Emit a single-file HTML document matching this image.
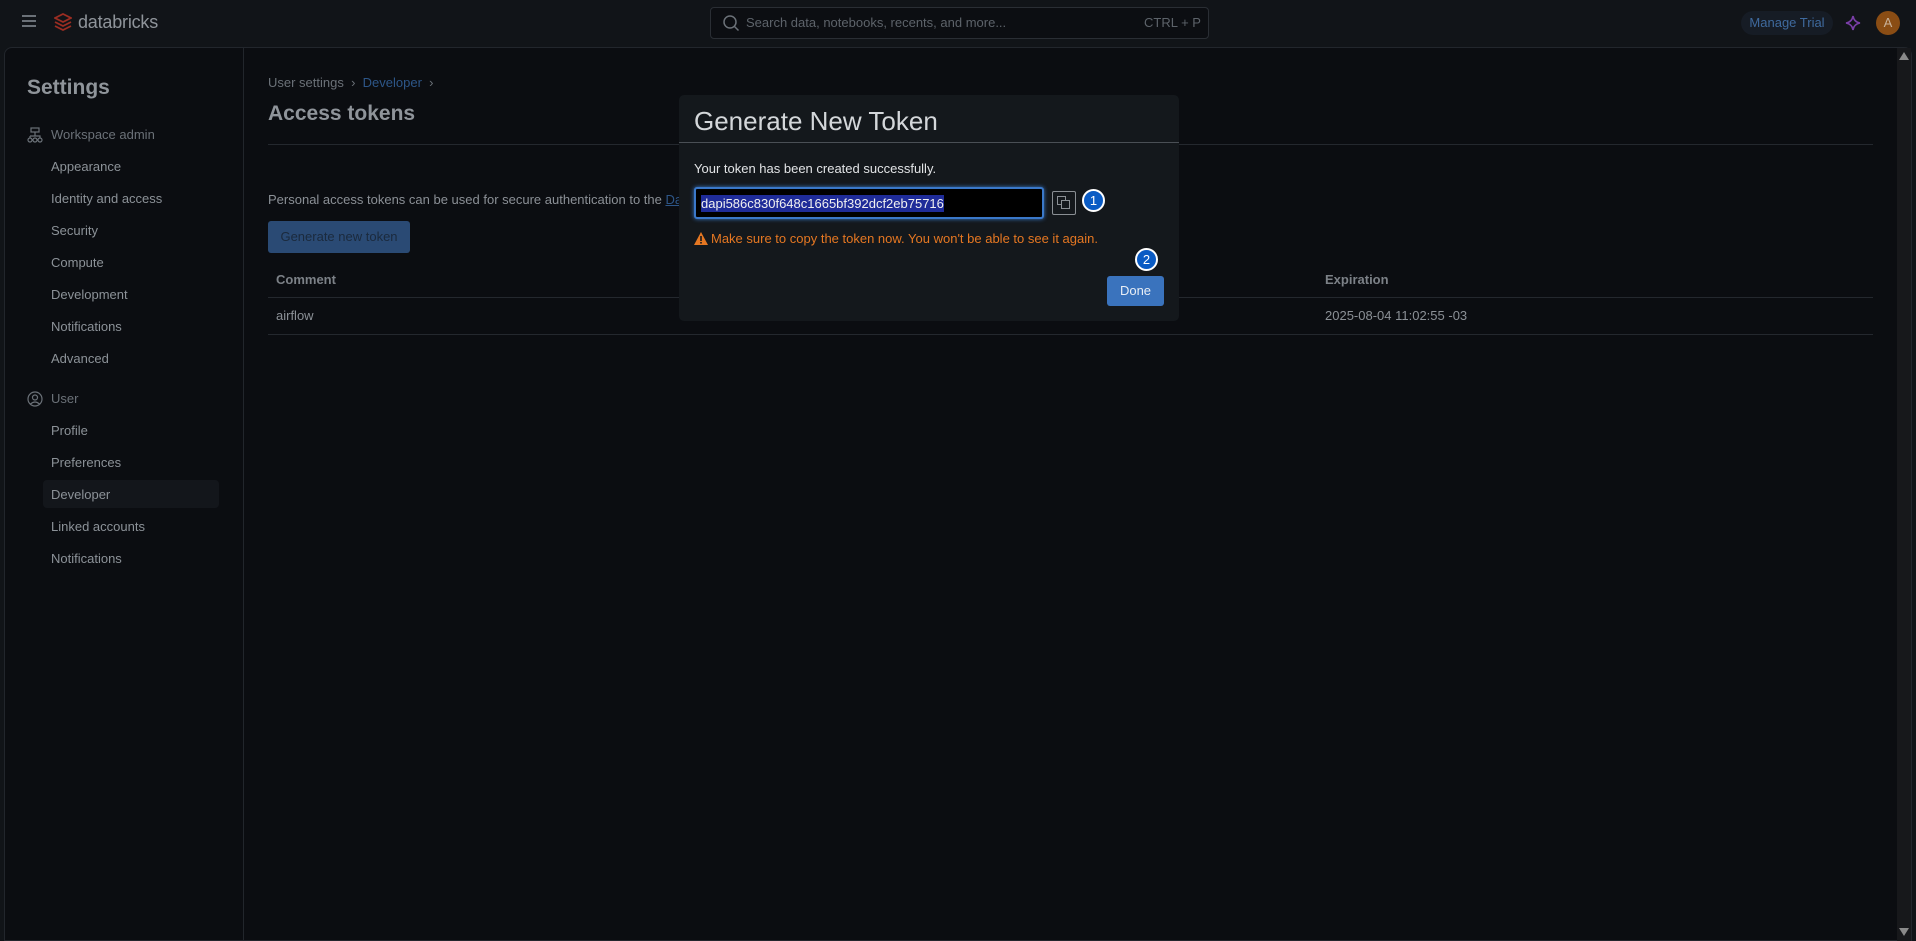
<!DOCTYPE html>
<html><head><meta charset="utf-8"><style>
*{box-sizing:border-box;margin:0;padding:0}
body{width:1916px;height:941px;background:#111418;font-family:"Liberation Sans",sans-serif;position:relative;overflow:hidden;color:#8b9096}
.abs{position:absolute;white-space:nowrap}
.panel{position:absolute;left:4px;top:47px;width:1908px;height:894px;background:#0b0d11;border:1px solid #22262c;border-radius:8px 8px 0 0}
.side{position:absolute;left:243px;top:48px;width:1px;height:893px;background:#22262c}
.si{position:absolute;left:51px;font-size:13px;color:#8c9298}
.hr{position:absolute;height:1px;background:#24282e}
</style></head><body>
<div class="abs" style="left:22px;top:15px;width:14px;height:2px;background:#6b7178;box-shadow:0 5px 0 #6b7178,0 10px 0 #6b7178"></div>
<svg class="abs" style="left:54px;top:13px" width="18" height="20" viewBox="0 0 18 20"><path d="M1 5l8-4 8 4-8 4zM1 9l8 4 8-4M1 13l8 4 8-4" fill="none" stroke="#9b2d22" stroke-width="1.8"/></svg>
<div class="abs" style="left:78px;top:12px;font-size:18px;color:#8f949a;letter-spacing:-0.2px">databricks</div>
<div class="abs" style="left:710px;top:7px;width:499px;height:32px;border:1px solid #2a2e34;border-radius:4px;background:#0c0e12"></div>
<svg class="abs" style="left:722px;top:14px" width="18" height="18" viewBox="0 0 18 18"><circle cx="8" cy="8" r="6" fill="none" stroke="#6b7178" stroke-width="1.5"/><path d="M12.5 12.5l4 4" stroke="#6b7178" stroke-width="1.5"/></svg>
<div class="abs" style="left:746px;top:15px;font-size:13px;color:#5d636a">Search data, notebooks, recents, and more...</div>
<div class="abs" style="left:1144px;top:15px;font-size:13px;color:#5d636a">CTRL + P</div>
<div class="abs" style="left:1741px;top:11px;width:92px;height:24px;border-radius:12px;background:#161c25;color:#3f6a9e;font-size:13px;line-height:24px;text-align:center">Manage Trial</div>
<svg class="abs" style="left:1845px;top:15px" width="16" height="16" viewBox="0 0 16 16"><path d="M8 1Q9 7 15 8Q9 9 8 15Q7 9 1 8Q7 7 8 1z" fill="none" stroke="#7a3ea8" stroke-width="1.6"/></svg>
<div class="abs" style="left:1876px;top:11px;width:24px;height:24px;border-radius:50%;background:#8a4d14;color:#c9b29a;font-size:13px;line-height:24px;text-align:center">A</div>

<div class="panel"></div>
<div class="side"></div>
<div class="abs" style="left:1897px;top:48px;width:14px;height:893px;background:#17181b"></div>
<div class="abs" style="left:1899px;top:52px;width:0;height:0;border-left:5px solid transparent;border-right:5px solid transparent;border-bottom:8px solid #8a8a8a"></div>
<div class="abs" style="left:1899px;top:928px;width:0;height:0;border-left:5px solid transparent;border-right:5px solid transparent;border-top:8px solid #8a8a8a"></div>

<div class="abs" style="left:27px;top:76px;font-size:21px;font-weight:bold;color:#8f949a">Settings</div>
<svg class="abs" style="left:27px;top:127px" width="16" height="16" viewBox="0 0 16 16" fill="none" stroke="#6b7178" stroke-width="1.2"><rect x="4" y="1" width="8" height="4"/><path d="M8 5v4M3 9h10v2M3 9v2"/><circle cx="3" cy="13" r="2"/><circle cx="8" cy="13" r="2"/><circle cx="13" cy="13" r="2"/></svg>
<div class="si" style="top:127px;color:#6b7178">Workspace admin</div>
<div class="si" style="top:159px">Appearance</div>
<div class="si" style="top:191px">Identity and access</div>
<div class="si" style="top:223px">Security</div>
<div class="si" style="top:255px">Compute</div>
<div class="si" style="top:287px">Development</div>
<div class="si" style="top:319px">Notifications</div>
<div class="si" style="top:351px">Advanced</div>
<svg class="abs" style="left:27px;top:391px" width="16" height="16" viewBox="0 0 16 16" fill="none" stroke="#6b7178" stroke-width="1.2"><circle cx="8" cy="8" r="7"/><circle cx="8" cy="6.5" r="2.5"/><path d="M3.5 13Q8 9 12.5 13"/></svg>
<div class="si" style="top:391px;color:#6b7178">User</div>
<div class="si" style="top:423px">Profile</div>
<div class="si" style="top:455px">Preferences</div>
<div class="abs" style="left:43px;top:480px;width:176px;height:28px;background:#13161b;border-radius:4px"></div>
<div class="si" style="top:487px">Developer</div>
<div class="si" style="top:519px">Linked accounts</div>
<div class="si" style="top:551px">Notifications</div>

<div class="abs" style="left:268px;top:75px;font-size:13px;color:#6b7178">User settings &nbsp;›&nbsp; <span style="color:#2d5688">Developer</span> &nbsp;›</div>
<div class="abs" style="left:268px;top:102px;font-size:21px;font-weight:bold;color:#8f949a">Access tokens</div>
<div class="hr" style="left:268px;top:144px;width:1605px"></div>
<div class="abs" style="left:268px;top:192px;font-size:13px;color:#8b9096">Personal access tokens can be used for secure authentication to the <span style="color:#2d5688;text-decoration:underline">Dat</span></div>
<div class="abs" style="left:268px;top:221px;width:142px;height:32px;background:#2a4a74;border-radius:3px;color:#1b2a3d;font-size:13px;line-height:32px;text-align:center">Generate new token</div>
<div class="abs" style="left:276px;top:272px;font-size:13px;font-weight:bold;color:#7c8187">Comment</div>
<div class="abs" style="left:1325px;top:272px;font-size:13px;font-weight:bold;color:#7c8187">Expiration</div>
<div class="hr" style="left:268px;top:297px;width:1605px"></div>
<div class="abs" style="left:276px;top:308px;font-size:13px;color:#8b9096">airflow</div>
<div class="abs" style="left:1325px;top:308px;font-size:13px;color:#8b9096">2025-08-04 11:02:55 -03</div>
<div class="hr" style="left:268px;top:334px;width:1605px"></div>

<div class="abs" style="left:679px;top:95px;width:500px;height:226px;background:#14181c;border-radius:5px"></div>
<div class="abs" style="left:694px;top:106px;font-size:26px;color:#d4d7da">Generate New Token</div>
<div class="abs" style="left:679px;top:142px;width:500px;height:1px;background:#4a4f55"></div>
<div class="abs" style="left:694px;top:161px;font-size:13px;color:#e2e4e6">Your token has been created successfully.</div>
<div class="abs" style="left:694px;top:187px;width:350px;height:32px;border:2px solid #3a78c9;border-radius:3px;background:#000;box-shadow:0 0 4px #3a78c9"></div>
<div class="abs" style="left:701px;top:195px;height:17px;background:#1f2c99;color:#f0f0f0;font-size:13px;line-height:17px">dapi586c830f648c1665bf392dcf2eb75716</div>
<div class="abs" style="left:1052px;top:191px;width:24px;height:24px;border:1px solid #8a8f94;border-radius:2px"></div>
<div class="abs" style="left:1057px;top:196px;width:9px;height:9px;border:1.5px solid #8a8f94"></div>
<div class="abs" style="left:1061px;top:200px;width:9px;height:9px;border:1.5px solid #8a8f94;background:#14181c"></div>
<div class="abs" style="left:1082px;top:189px;width:23px;height:23px;border-radius:50%;background:#0a5bc4;border:2px solid #fff;color:#fff;font-size:13px;line-height:19px;text-align:center">1</div>
<svg class="abs" style="left:694px;top:232px" width="14" height="13" viewBox="0 0 14 13"><path d="M7 0L14 13H0z" fill="#e57722"/><rect x="6.2" y="4" width="1.6" height="5" fill="#14181c"/><rect x="6.2" y="10" width="1.6" height="1.6" fill="#14181c"/></svg>
<div class="abs" style="left:711px;top:231px;font-size:13px;color:#e57722">Make sure to copy the token now. You won't be able to see it again.</div>
<div class="abs" style="left:1135px;top:248px;width:23px;height:23px;border-radius:50%;background:#0a5bc4;border:2px solid #fff;color:#fff;font-size:13px;line-height:19px;text-align:center">2</div>
<div class="abs" style="left:1107px;top:276px;width:57px;height:30px;background:#3a73bd;border-radius:3px;color:#e8eef5;font-size:13px;line-height:30px;text-align:center">Done</div>
</body></html>
